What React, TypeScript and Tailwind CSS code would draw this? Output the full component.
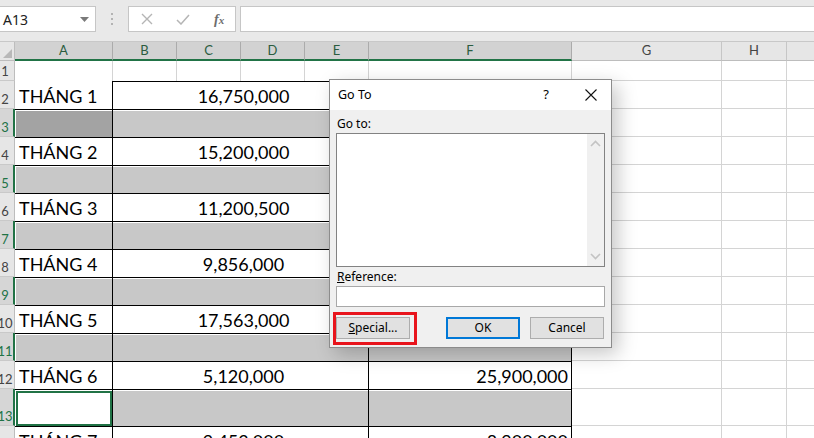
import React from "react";

type Row = {
  n: number;
  h: string;
  kind: "data" | "gray";
  label?: string;
  mid?: string;
  f?: string;
  darkA?: boolean;
  active?: boolean;
};

const rows: Row[] = [
  { n: 2, h: "h-[28px]", kind: "data", label: "THÁNG 1", mid: "16,750,000", f: "32,500,000" },
  { n: 3, h: "h-[28px]", kind: "gray", darkA: true },
  { n: 4, h: "h-[28px]", kind: "data", label: "THÁNG 2", mid: "15,200,000", f: "29,400,000" },
  { n: 5, h: "h-[28px]", kind: "gray" },
  { n: 6, h: "h-[28px]", kind: "data", label: "THÁNG 3", mid: "11,200,500", f: "22,100,000" },
  { n: 7, h: "h-[28px]", kind: "gray" },
  { n: 8, h: "h-[28px]", kind: "data", label: "THÁNG 4", mid: "9,856,000", f: "19,700,000" },
  { n: 9, h: "h-[28px]", kind: "gray" },
  { n: 10, h: "h-[28px]", kind: "data", label: "THÁNG 5", mid: "17,563,000", f: "34,800,000" },
  { n: 11, h: "h-[28px]", kind: "gray" },
  { n: 12, h: "h-[28px]", kind: "data", label: "THÁNG 6", mid: "5,120,000", f: "25,900,000" },
  { n: 13, h: "h-[37px]", kind: "gray", active: true },
  { n: 14, h: "h-[28px]", kind: "data", label: "THÁNG 7", mid: "9,453,000", f: "8,900,000" },
];

const cellFont = { fontFamily: "Lato, 'Noto Sans', sans-serif" };

function RowHeader({ n, sel }: { n: number; sel: boolean }) {
  return (
    <div
      className={`w-[15px] shrink-0 overflow-hidden flex items-end pb-[1px] border-b border-[#c9c9c9] ${
        sel ? "bg-[#d6d6d6] border-r-2 border-r-[#217346] text-[#217346]" : "bg-[#e6e6e6] border-r border-r-[#bdbdbd] text-[#444]"
      }`}
    >
      <span className="-ml-[6px] w-[22px] shrink-0 text-center text-[13px] leading-[16px]">{n}</span>
    </div>
  );
}

function GridTail() {
  return (
    <>
      <div className="w-[150px] shrink-0 border-r border-b border-[#d4d4d4]" />
      <div className="w-[65px] shrink-0 border-r border-b border-[#d4d4d4]" />
      <div className="flex-1 border-b border-[#d4d4d4]" />
    </>
  );
}

function SheetRow({ r }: { r: Row }) {
  const top = r.n === 2 ? "" : "border-t border-t-black";
  if (r.kind === "data") {
    return (
      <div className={`flex ${r.h}`}>
        <RowHeader n={r.n} sel={false} />
        <div className={`w-[98px] shrink-0 flex items-end pl-[4px] pb-[1px] border-r border-r-black ${top}`}>
          <span className="text-[18px] leading-[24px] text-black">{r.label}</span>
        </div>
        <div className="w-[256px] shrink-0 flex items-end justify-center pl-[6px] pb-[1px] border-r border-r-black border-t border-t-black">
          <span className="text-[18px] leading-[24px] text-black">{r.mid}</span>
        </div>
        <div className="w-[203px] shrink-0 flex items-end justify-end pr-[3px] pb-[1px] border-r border-r-black border-t border-t-black">
          <span className="text-[18px] leading-[24px] text-black">{r.f}</span>
        </div>
        <GridTail />
      </div>
    );
  }
  return (
    <div className={`flex ${r.h}`}>
      <RowHeader n={r.n} sel={true} />
      <div className={`w-[98px] shrink-0 pl-[1px] pt-[1px] border-r border-r-black ${top}`}>
        {r.active ? (
          <div className="h-full border-2 border-[#217346] bg-white" />
        ) : (
          <div className={`h-full ${r.darkA ? "bg-[#a3a3a3]" : "bg-[#c8c8c8]"}`} />
        )}
      </div>
      <div className="w-[256px] shrink-0 pt-[1px] border-r border-r-black border-t border-t-black">
        <div className="h-full bg-[#c8c8c8]" />
      </div>
      <div className="w-[203px] shrink-0 pt-[1px] border-r border-r-black border-t border-t-black">
        <div className="h-full bg-[#c8c8c8]" />
      </div>
      <GridTail />
    </div>
  );
}

function ColHeader({ label, w, sel }: { label: string; w: string; sel: boolean }) {
  return (
    <div
      className={`${w} shrink-0 flex items-center justify-center text-[13px] border-r ${
        sel
          ? "bg-[#d2d2d2] text-[#2b5c3f] border-r-[#ababab] border-b-2 border-b-[#217346]"
          : "bg-[#e6e6e6] text-[#444] border-r-[#c6c6c6] border-b border-b-[#bdbdbd]"
      }`}
    >
      {label}
    </div>
  );
}

function FormulaBar() {
  return (
    <div className="h-[42px] bg-[#e9e9e9] pt-[6px] flex items-start border-b border-[#c8c8c8]">
      <div className="w-[96px] h-[26px] bg-white border border-l-0 border-[#c6c6c6] flex items-center justify-between pl-[3px] pr-[6px]">
        <span className="text-[14px] text-[#222]" style={{ fontFamily: "'Noto Sans', sans-serif" }}>A13</span>
        <svg width="9" height="5" viewBox="0 0 9 5">
          <path d="M0 0 L9 0 L4.5 5 Z" fill="#7a7a7a" />
        </svg>
      </div>
      <div className="w-[32px] h-[26px] flex items-center justify-center">
        <div className="flex flex-col gap-[3px]">
          <span className="block w-[2px] h-[2px] bg-[#b3b3b3]" />
          <span className="block w-[2px] h-[2px] bg-[#b3b3b3]" />
          <span className="block w-[2px] h-[2px] bg-[#b3b3b3]" />
        </div>
      </div>
      <div className="w-[108px] h-[26px] bg-white border border-[#c6c6c6] flex items-center pl-[12px]">
        <svg width="12" height="12" viewBox="0 0 12 12" className="mr-[23px]">
          <path d="M1 1 L11 11 M11 1 L1 11" stroke="#b5b5b5" strokeWidth="1.4" />
        </svg>
        <svg width="14" height="11" viewBox="0 0 14 11" className="mr-[24px]">
          <path d="M1 6 L5 10 L13 1" stroke="#b5b5b5" strokeWidth="1.5" fill="none" />
        </svg>
        <span className="text-[14px] italic text-[#6d6d6d] font-semibold" style={{ fontFamily: "'Liberation Serif', serif" }}>
          f<span className="text-[11px]">x</span>
        </span>
      </div>
      <div className="ml-[4px] flex-1 h-[26px] bg-white border border-r-0 border-[#c6c6c6]" />
    </div>
  );
}

function Chevron({ up }: { up: boolean }) {
  return (
    <svg width="11" height="7" viewBox="0 0 11 7">
      <path d={up ? "M1 6 L5.5 1.5 L10 6" : "M1 1 L5.5 5.5 L10 1"} stroke="#c3c3c3" strokeWidth="1.6" fill="none" />
    </svg>
  );
}

function GoToDialog() {
  const btn = "w-[74px] h-[22px] bg-[#e1e1e1] flex items-center justify-center text-[12px] text-black";
  return (
    <div
      className="absolute left-[329px] top-[79px] w-[283px] h-[269px] border border-[#8c8c8c] bg-[#f0f0f0] shadow-[6px_6px_18px_rgba(0,0,0,0.22)] flex flex-col"
      style={{ fontFamily: "'Noto Sans', 'Open Sans', sans-serif" }}
    >
      <div className="h-[30px] bg-white flex items-center pl-[8px] pr-[14px]">
        <span className="text-[12.5px] text-black">Go To</span>
        <span className="ml-auto mr-[36px] text-[13px] text-black">?</span>
        <svg width="12" height="12" viewBox="0 0 12 12">
          <path d="M0.5 0.5 L11.5 11.5 M11.5 0.5 L0.5 11.5" stroke="#111" strokeWidth="1.1" />
        </svg>
      </div>
      <div className="flex-1 flex flex-col px-[6px] pt-[5px]">
        <span className="text-[12px] leading-[17px] text-black pl-[1px]">Go to:</span>
        <div className="mt-[1px] h-[134px] bg-white border border-[#828282] flex justify-end">
          <div className="w-[17px] h-full bg-[#f0f0f0] flex flex-col items-center justify-between py-[6px]">
            <Chevron up={true} />
            <Chevron up={false} />
          </div>
        </div>
        <span className="mt-[1px] text-[12px] leading-[17px] text-black pl-[1px]">
          <span className="underline">R</span>eference:
        </span>
        <div className="mt-[1px] h-[21px] bg-white border border-[#a8a8a8]" />
        <div className="mt-[10px] flex items-center">
          <div className="relative">
            <div className={`${btn} border border-[#adadad]`}>
              <span>
                <span className="underline">S</span>pecial...
              </span>
            </div>
            <span className="absolute -left-[3px] -right-[7px] -top-[5px] -bottom-[6px] border-[3px] border-[#e8141c]" />
          </div>
          <div className={`${btn} ml-[36px] border-2 border-[#0078d7]`}>OK</div>
          <div className={`${btn} ml-[10px] border border-[#adadad]`}>Cancel</div>
        </div>
      </div>
    </div>
  );
}

export default function App() {
  return (
    <div className="relative w-[814px] h-[438px] overflow-hidden bg-white" style={cellFont}>
      <FormulaBar />

      {/* Column headers */}
      <div className="flex h-[19px]">
        <div className="w-[15px] shrink-0 bg-[#e6e6e6] border-r border-b border-[#bdbdbd] flex items-end justify-end p-[2px]">
          <svg width="9" height="9" viewBox="0 0 9 9">
            <path d="M9 0 L9 9 L0 9 Z" fill="#b8b8b8" />
          </svg>
        </div>
        <ColHeader label="A" w="w-[98px]" sel={true} />
        <ColHeader label="B" w="w-[64px]" sel={true} />
        <ColHeader label="C" w="w-[64px]" sel={true} />
        <ColHeader label="D" w="w-[64px]" sel={true} />
        <ColHeader label="E" w="w-[64px]" sel={true} />
        <ColHeader label="F" w="w-[203px]" sel={true} />
        <ColHeader label="G" w="w-[150px]" sel={false} />
        <ColHeader label="H" w="w-[65px]" sel={false} />
        <div className="flex-1 bg-[#e6e6e6] border-b border-[#bdbdbd]" />
      </div>

      {/* Row 1 */}
      <div className="flex h-[20px]">
        <RowHeader n={1} sel={false} />
        <div className="w-[98px] shrink-0 border-r border-[#d4d4d4]" />
        <div className="w-[64px] shrink-0 border-r border-[#d4d4d4]" />
        <div className="w-[64px] shrink-0 border-r border-[#d4d4d4]" />
        <div className="w-[64px] shrink-0 border-r border-[#d4d4d4]" />
        <div className="w-[64px] shrink-0 border-r border-[#d4d4d4]" />
        <div className="w-[203px] shrink-0 border-r border-[#d4d4d4]" />
        <GridTail />
      </div>

      {rows.map((r) => (
        <SheetRow key={r.n} r={r} />
      ))}

      <GoToDialog />
    </div>
  );
}
